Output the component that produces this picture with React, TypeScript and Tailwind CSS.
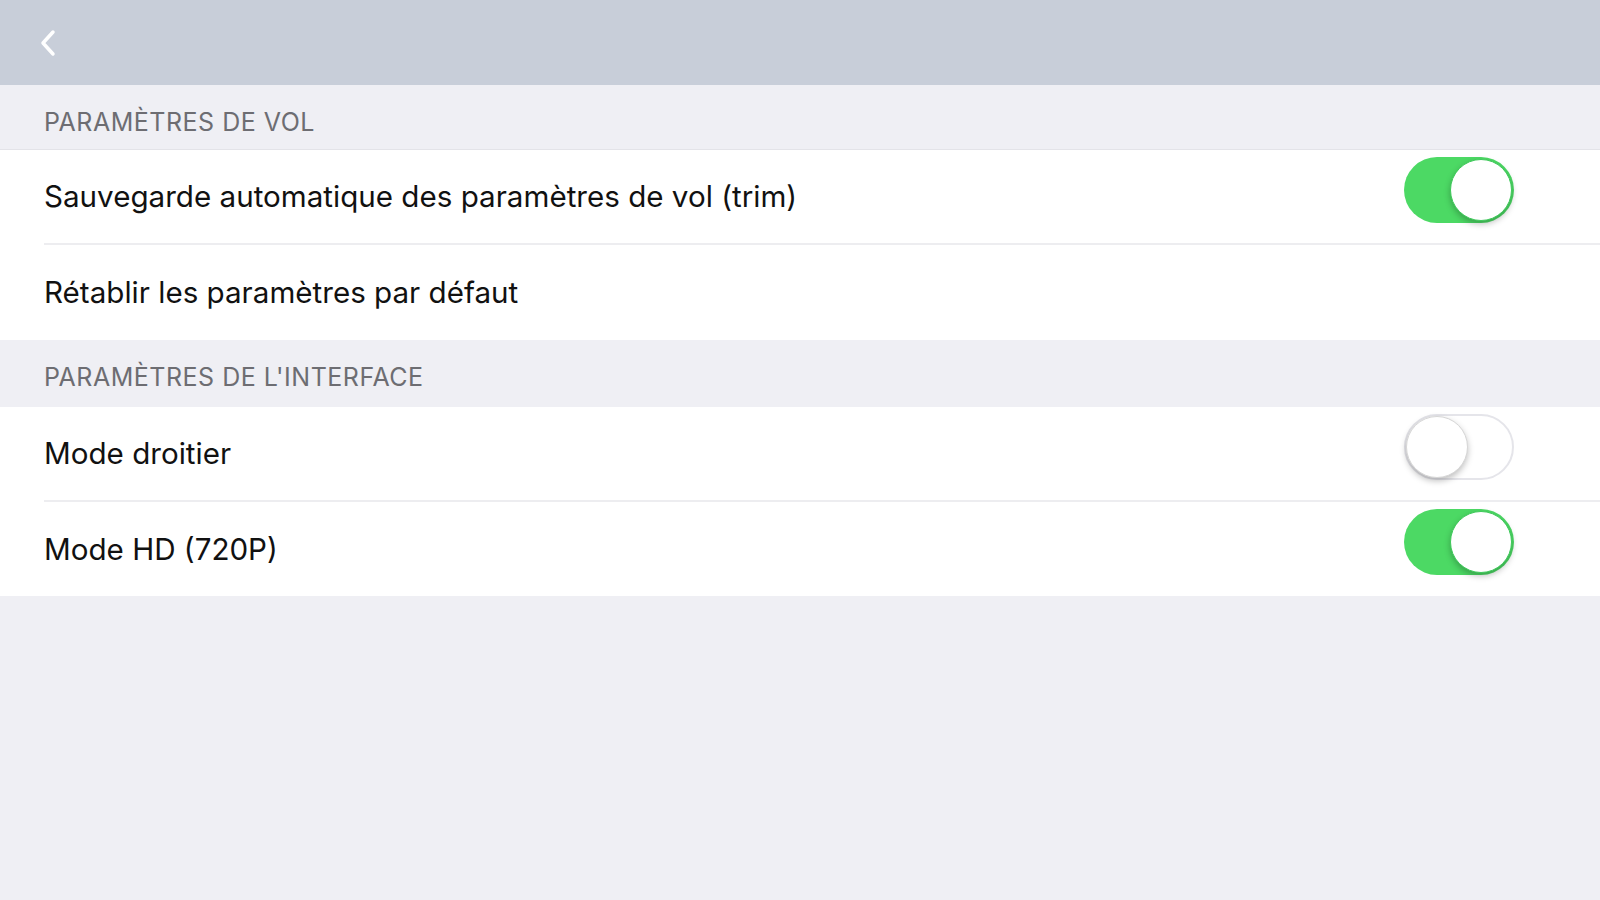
import { useState } from 'react'

function Toggle({ on, onChange }: { on: boolean; onChange: () => void }) {
  return (
    <button
      onClick={onChange}
      className={`relative mb-[14px] h-[66px] w-[110px] rounded-full transition-colors ${
        on ? 'bg-[#4cd964]' : 'bg-white border-2 border-[#e5e5ea]'
      }`}
    >
      <span
        className={`absolute top-1/2 -translate-y-1/2 h-[62px] w-[62px] rounded-full bg-white shadow-[0_3px_6px_rgba(0,0,0,0.25)] ${
          on ? 'right-[2px] border border-[#3ec95a]' : 'left-[0px] border border-[#d6d6d6]'
        }`}
      />
    </button>
  )
}

function SectionHeader({ title, className }: { title: string; className?: string }) {
  return (
    <div className={`flex items-center pl-[44px] text-[25px] tracking-[0.5px] text-[#6d6d72] bg-[#efeff4] ${className ?? ''}`}>
      {title}
    </div>
  )
}

function Row({ label, last, h = 'h-[95px]', children }: { label: string; last?: boolean; h?: string; children?: React.ReactNode }) {
  return (
    <div className="pl-[44px] bg-white">
      <div className={`flex ${h} items-center justify-between pr-[86px] ${last ? '' : 'border-b-2 border-[#ededf0]'}`}>
        <span className="text-[29.6px] text-[#111]">{label}</span>
        {children}
      </div>
    </div>
  )
}

export default function App() {
  const [trim, setTrim] = useState(true)
  const [rightHanded, setRightHanded] = useState(false)
  const [hd, setHd] = useState(true)

  return (
    <div className="min-h-[900px] bg-[#efeff4] font-['Inter','Liberation_Sans',sans-serif]">
      {/* Header */}
      <div className="flex h-[85px] items-center bg-[#c8ced9] pl-[38px]">
        <svg width="22" height="30" viewBox="0 0 22 30" fill="none">
          <path d="M15 4 L5 15 L15 26" stroke="white" strokeWidth="3.5" strokeLinecap="round" strokeLinejoin="round" />
        </svg>
      </div>

      <SectionHeader title="PARAMÈTRES DE VOL" className="h-[65px] pt-[11px] border-b border-[#e3e3e8]" />
      <Row label="Sauvegarde automatique des paramètres de vol (trim)">
        <Toggle on={trim} onChange={() => setTrim(!trim)} />
      </Row>
      <Row label="Rétablir les paramètres par défaut" last />

      <SectionHeader title="PARAMÈTRES DE L'INTERFACE" className="h-[67px] pt-[9px]" />
      <Row label="Mode droitier">
        <Toggle on={rightHanded} onChange={() => setRightHanded(!rightHanded)} />
      </Row>
      <Row label="Mode HD (720P)" last h="h-[94px]">
        <Toggle on={hd} onChange={() => setHd(!hd)} />
      </Row>
    </div>
  )
}
